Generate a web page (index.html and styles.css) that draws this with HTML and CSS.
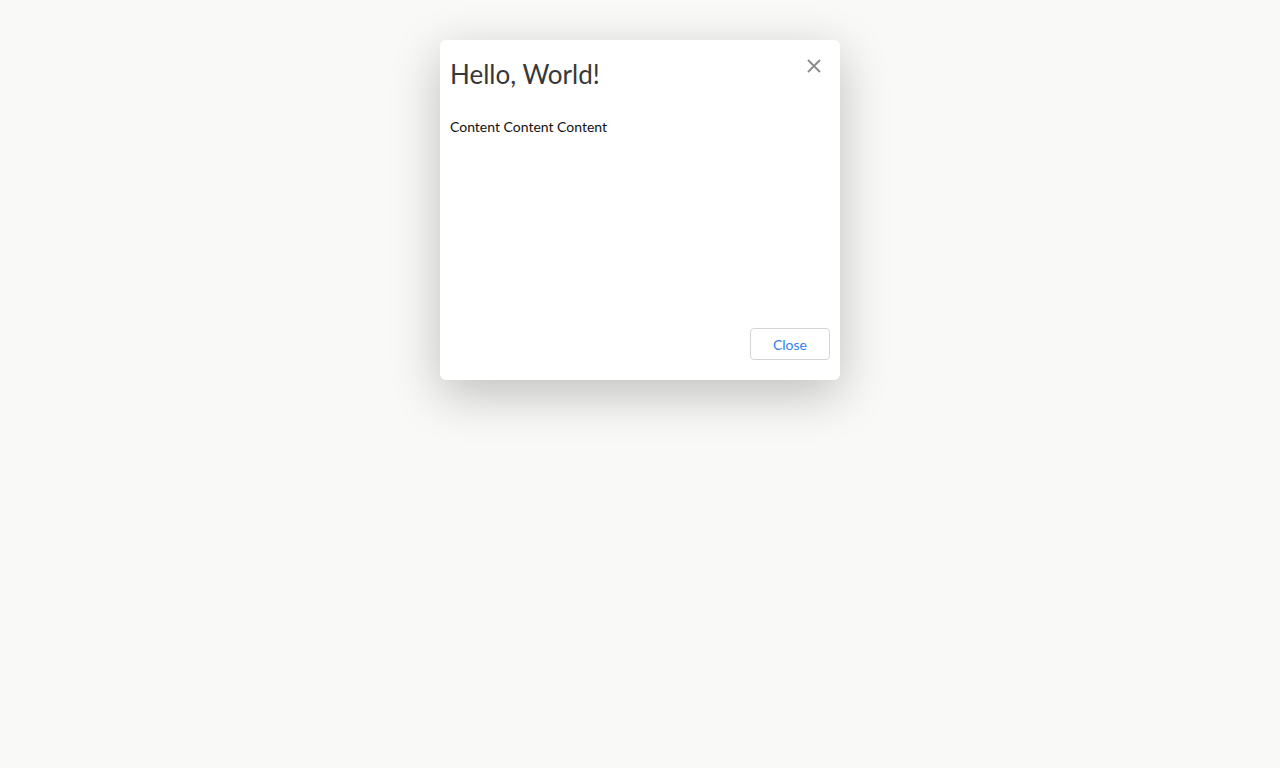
FILE: index.html
```html
<!DOCTYPE html>
<html>
<head>
<meta charset="utf-8">
<link rel="stylesheet" href="styles.css">
</head>
<body>
<div class="stage">
  <div class="modal">
    <div class="modal-header">
      <h1 class="modal-title">Hello, World!</h1>
      <button class="modal-x" aria-label="Close">
        <svg width="16" height="16" viewBox="0 0 16 16"><path d="M2 2 L14 14 M14 2 L2 14" stroke="#8a8a8a" stroke-width="1.8" fill="none"/></svg>
      </button>
    </div>
    <div class="modal-body">Content Content Content</div>
    <div class="modal-footer">
      <button class="btn">Close</button>
    </div>
  </div>
</div>
</body>
</html>
```
FILE: styles.css
```css
html, body {
  margin: 0;
  padding: 0;
  background: #f9f9f7;
  font-family: "Lato", "Open Sans", sans-serif;
}
.stage {
  display: flex;
  justify-content: center;
  align-items: flex-start;
  padding-top: 40px;
  min-height: 100vh;
  box-sizing: border-box;
}
.modal {
  width: 400px;
  height: 340px;
  box-sizing: border-box;
  background: #fff;
  border-radius: 6px;
  box-shadow: 0 14px 50px rgba(0,0,0,0.24);
  display: flex;
  flex-direction: column;
  padding: 0 10px 20px 10px;
}
.modal-header {
  display: flex;
  justify-content: space-between;
  align-items: flex-start;
  padding-top: 16px;
}
.modal-title {
  margin: 0;
  font-size: 26px;
  font-weight: 400;
  color: #383838;
  line-height: 36px;
}
.modal-x {
  border: 0;
  background: none;
  padding: 0;
  margin: 2px 8px 0 0;
  width: 16px;
  height: 16px;
  cursor: pointer;
}
.modal-body {
  flex: 1;
  font-size: 14px;
  color: #111;
  padding-top: 26px;
  line-height: 18px;
}
.modal-footer {
  display: flex;
  justify-content: flex-end;
}
.btn {
  width: 80px;
  height: 32px;
  border: 1px solid #d5d5d5;
  border-radius: 4px;
  background: #fff;
  color: #2f80ed;
  font-family: inherit;
  font-size: 14px;
}
```
